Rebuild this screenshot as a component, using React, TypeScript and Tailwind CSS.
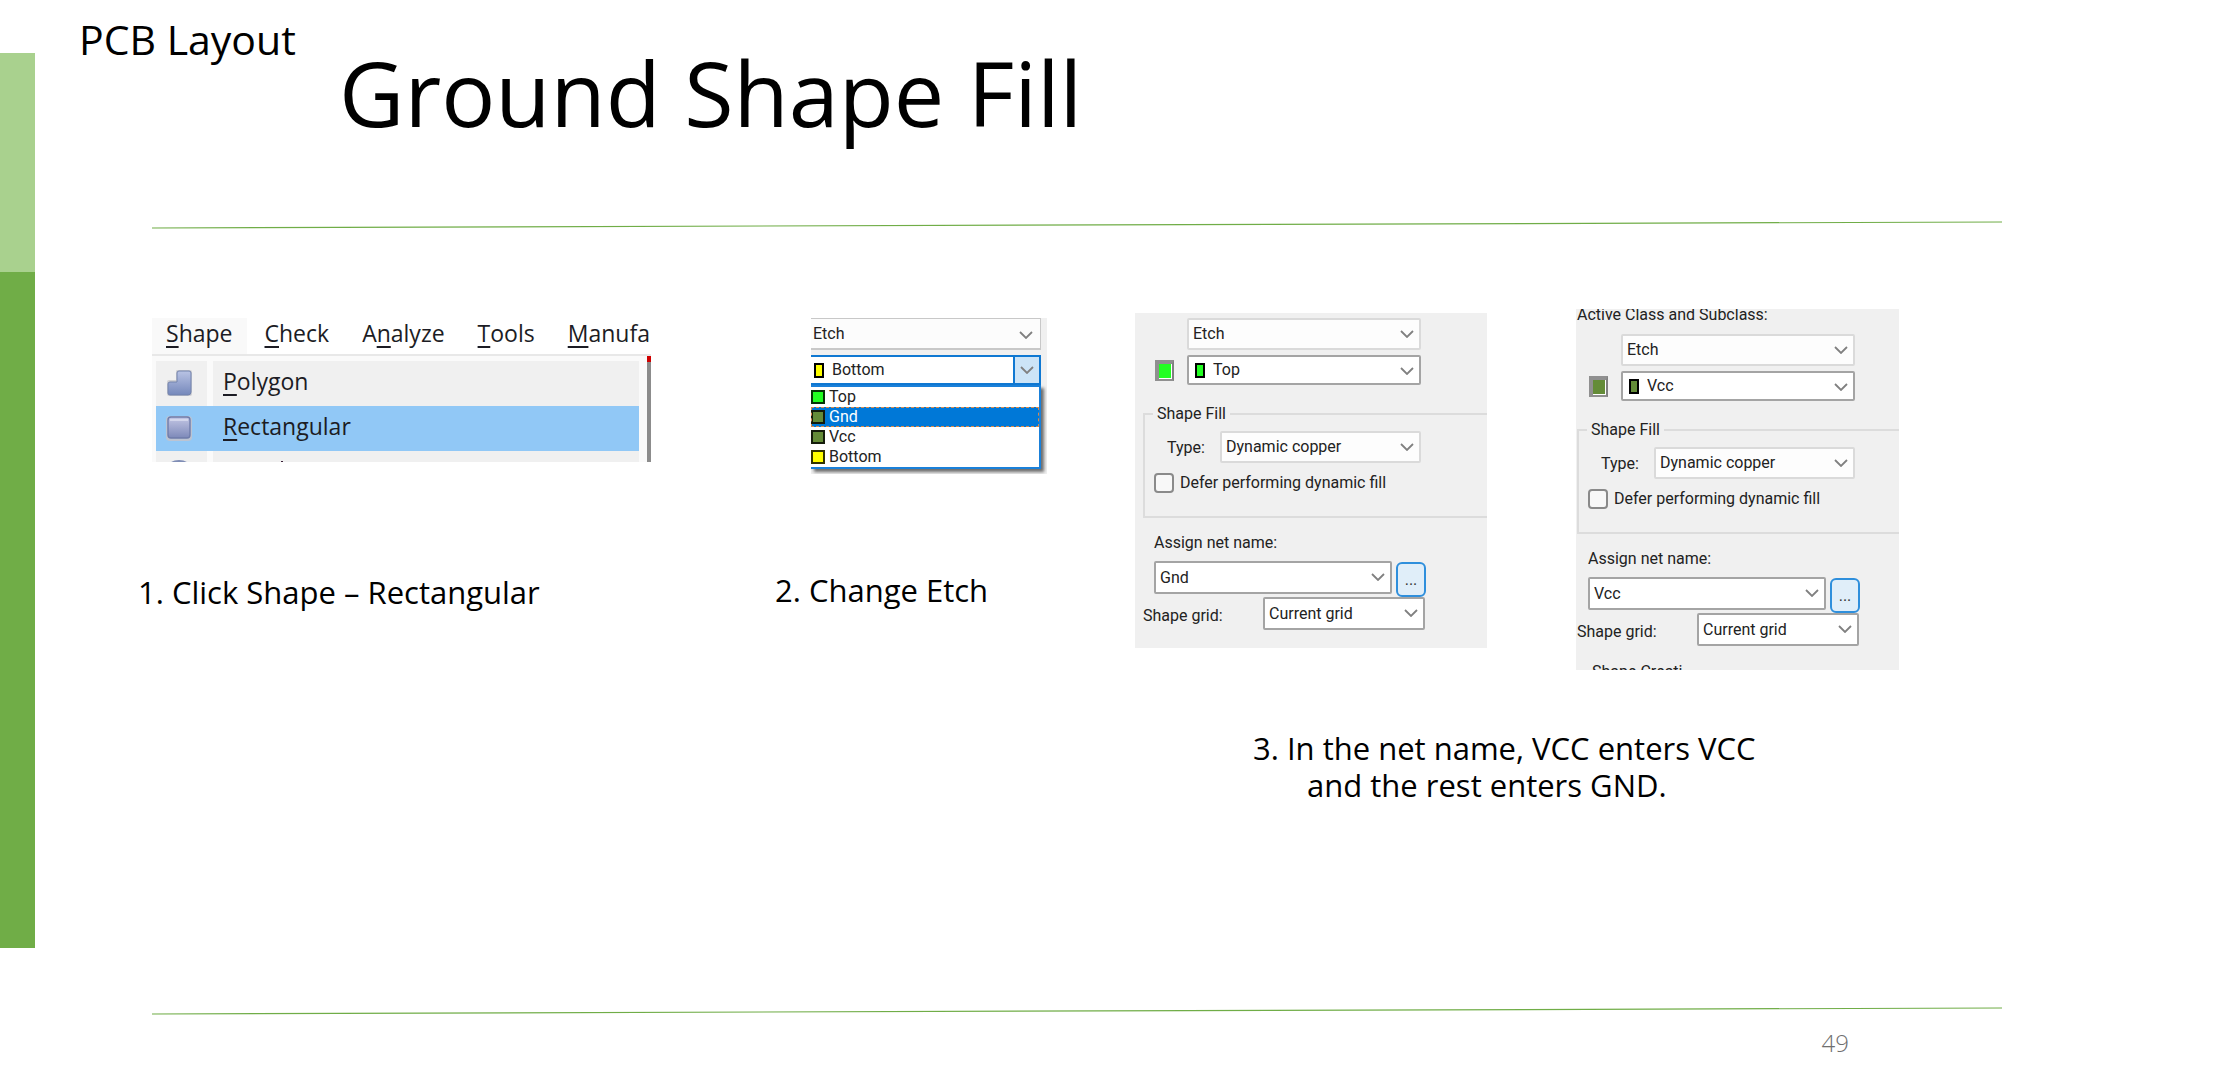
import { useState } from 'react'
import type { ReactNode } from 'react'
import clsx from 'clsx'

const LAYERS = [
  { name: 'Top', swatch: 'bg-[#22ff22]' },
  { name: 'Gnd', swatch: 'bg-[#648c38]' },
  { name: 'Vcc', swatch: 'bg-[#648c38]' },
  { name: 'Bottom', swatch: 'bg-[#ffff00]' },
]

const MENUS = [
  { before: '', key: 'S', after: 'hape', open: true },
  { before: '', key: 'C', after: 'heck' },
  { before: 'A', key: 'n', after: 'alyze' },
  { before: '', key: 'T', after: 'ools' },
  { before: '', key: 'M', after: 'anufa' },
]

function Rule() {
  return (
    <svg className="block w-full h-2" viewBox="0 0 1850 8" preserveAspectRatio="none" aria-hidden="true">
      <line x1="0" y1="7" x2="1850" y2="1" stroke="#70ad47" strokeWidth="1.2" />
    </svg>
  )
}

function Chevron({ className }: { className?: string }) {
  return (
    <svg className={clsx('pointer-events-none', className)} width="14" height="8" viewBox="0 0 14 8" fill="none" aria-hidden="true">
      <path d="M1 1l6 6 6-6" stroke="#808080" strokeWidth="1.8" />
    </svg>
  )
}

interface ComboProps {
  id: string
  value: string
  label?: string
  muted?: boolean
  swatch?: string
  className?: string
}

function Combo({ id, value, label, muted, swatch, className }: ComboProps) {
  return (
    <div className={clsx('relative', className)}>
      <select
        id={id}
        aria-label={label}
        defaultValue={value}
        className={clsx(
          'block w-full h-full appearance-none rounded-xs border-2 pr-6 outline-none',
          swatch ? 'pl-6' : 'pl-1',
          muted ? 'bg-[#fdfdfd] border-[#dadada]' : 'bg-white border-[#a4a4a4]',
        )}
      >
        <option>{value}</option>
      </select>
      {swatch && <span className={clsx('absolute left-2 top-2 w-2.5 h-[15px] border-2 border-black', swatch)} />}
      <Chevron className="absolute right-[7px] top-3" />
    </div>
  )
}

function Mnemonic({ before = '', letter, after }: { before?: string; letter: string; after: string }) {
  return (
    <span>
      {before}
      <span className="underline decoration-2 underline-offset-4">{letter}</span>
      {after}
    </span>
  )
}

function PolygonIcon() {
  return (
    <svg width="26" height="26" viewBox="0 0 26 26" aria-hidden="true">
      <defs>
        <linearGradient id="polyFill" x1="0" y1="0" x2="0" y2="1">
          <stop offset="0" stopColor="#b9c3e4" />
          <stop offset="1" stopColor="#7588bb" />
        </linearGradient>
      </defs>
      <path d="M11 0h13q2 0 2 2v22q0 2-2 2H3q-2 0-2-2V12q0-2 2-2h7V2q0-2 1-2z" fill="#cfcfd2" />
      <path d="M13 1h10q2 0 2 2v19q0 3-3 3H4q-2 0-2-2v-9q0-2 2-2h7V3q0-2 2-2z" fill="url(#polyFill)" stroke="#7383ad" />
    </svg>
  )
}

function RectIcon() {
  return (
    <svg width="26" height="26" viewBox="0 0 26 26" aria-hidden="true">
      <defs>
        <linearGradient id="rectFill" x1="0" y1="0" x2="0" y2="1">
          <stop offset="0" stopColor="#c3c6e4" />
          <stop offset="1" stopColor="#7d89b9" />
        </linearGradient>
      </defs>
      <rect x="0" y="1" width="26" height="25" rx="4" fill="#bcc4d2" />
      <rect x="2" y="2" width="22" height="21" rx="3" fill="url(#rectFill)" stroke="#6f7cab" strokeWidth="1.4" />
      <path d="M4 5h18" stroke="#dcdff0" strokeWidth="1.5" />
    </svg>
  )
}

function MenuRow({ icon, active, children }: { icon: ReactNode; active?: boolean; children: ReactNode }) {
  return (
    <button type="button" className={clsx('flex w-full h-[45px] text-left', active && 'bg-[#91c8f6]')}>
      <span className={clsx('w-[51px] h-full flex items-center pl-2.5 pb-0.5', !active && 'bg-[#f0f0f0]')}>{icon}</span>
      <span className={clsx('ml-1.5 pl-2.5 flex-1 h-full leading-10', !active && 'bg-[#f0f0f0]')}>{children}</span>
    </button>
  )
}

function ShapeMenu() {
  return (
    <div className="ml-3 w-[499px] h-36 overflow-hidden font-['Open_Sans','Noto_Sans',sans-serif] text-[23px] text-[#1c1c24]">
      <nav className="flex h-[38px] border-b-2 border-[#e8e8e8] leading-7">
        {MENUS.map(m => (
          <button key={m.key} type="button" className={clsx('shrink-0 pb-1.5', m.open ? 'bg-[#f9f9f9] px-3.5 mr-0.5' : 'bg-white pl-4 pr-[17px]')}>
            <Mnemonic before={m.before} letter={m.key} after={m.after} />
          </button>
        ))}
      </nav>
      <div className="flex">
        <div className="flex-1 bg-[#fafafa] pl-1 pr-2 pt-[5px]">
          <MenuRow icon={<PolygonIcon />}><Mnemonic letter="P" after="olygon" /></MenuRow>
          <MenuRow active icon={<RectIcon />}><Mnemonic letter="R" after="ectangular" /></MenuRow>
          <div className="flex h-3">
            <div className="w-[51px] bg-[#f0f0f0] pl-3.5">
              {/* top of the next entry, cut by the window edge */}
              <svg className="block" width="18" height="12" viewBox="0 0 18 12" aria-hidden="true">
                <path d="M0 12q3-3 9-3t9 3z" fill="#7f8db5" />
              </svg>
            </div>
            <div className="ml-1.5 flex-1 bg-[#f0f0f0] pl-[68px] pt-2.5">
              <div className="w-0.5 h-0.5 bg-[#3a2038]" />
            </div>
          </div>
        </div>
        {/* edge of the drawing canvas behind the menu */}
        <div className="w-1 bg-[#8c8c8c] border-t-[6px] border-[#d00000]" />
      </div>
    </div>
  )
}

function EtchDropdown() {
  const [selected, setSelected] = useState('Gnd')

  return (
    <div className="ml-[34px] w-[236px] h-[156px] overflow-hidden bg-[#f0f0f0] pr-1.5 font-[Roboto,sans-serif] text-base text-[#222]">
      <div className="relative h-8 border-b-2 border-r border-t border-[#c8c8c8] bg-[#fcfcfc]">
        <select aria-label="Class" className="block w-full h-full appearance-none pl-0.5 outline-none">
          <option>Etch</option>
        </select>
        <Chevron className="absolute right-[7px] top-3" />
      </div>
      <button
        type="button"
        aria-haspopup="listbox"
        aria-expanded="true"
        className="mt-[5px] flex w-full h-[30px] items-center border-2 border-l-0 border-[#0f78d2] bg-white text-left"
      >
        <span className="ml-[3px] mr-2 w-2.5 h-[15px] border-2 border-black bg-[#ffff00]" />
        <span className="flex-1">Bottom</span>
        <span className="w-[26px] h-full flex items-center justify-center border-l-2 border-[#0f78d2] bg-[#cce4f7]">
          <Chevron />
        </span>
      </button>
      <ul role="listbox" aria-label="Subclass" className="border-2 border-l-0 border-[#1a80d9] bg-white shadow-[3px_3px_3px_rgba(0,0,0,0.55)]">
        {LAYERS.map(l => (
          <li
            key={l.name}
            role="option"
            aria-selected={l.name === selected}
            onClick={() => setSelected(l.name)}
            className={clsx(
              'flex h-5 items-center gap-1 leading-5',
              l.name === selected && 'bg-[#0078d7] text-white outline-1 -outline-offset-1 outline-dashed outline-[#d98a4a]',
            )}
          >
            <span className={clsx('w-3.5 h-3.5 border-2 border-black/80', l.swatch)} />
            {l.name}
          </li>
        ))}
      </ul>
    </div>
  )
}

interface OptionsProps {
  id: string
  layer: string
  swatch: string
  inset: string
  className: string
  header?: string
  footer?: string
}

function OptionsPanel({ id, layer, swatch, inset, className, header, footer }: OptionsProps) {
  return (
    <form className={clsx('overflow-hidden bg-[#f0f0f0] font-[Roboto,sans-serif] text-base leading-5 text-[#222]', inset, className)}>
      {header && <div className="-mt-1.5 h-[26px] leading-6">{header}</div>}
      <div className="flex flex-col gap-[5px] pt-[5px] w-[278px]">
        <Combo id={`${id}-class`} label="Class" value="Etch" muted className="ml-11 h-8" />
        <div className="flex items-start">
          <span className="ml-3 mr-[13px] mt-[5px] w-[19px] h-[21px] border-2 border-[#909090] border-l-4 border-t-4 border-r-[#808080]">
            <span className={clsx('block w-full h-full border-r border-b border-white', swatch)} />
          </span>
          <Combo id={`${id}-subclass`} label="Subclass" value={layer} swatch={swatch} className="flex-1 h-[30px]" />
        </div>
      </div>

      <fieldset className="mt-[19px] h-[114px] border-2 border-r-0 border-[#dcdcdc] pl-2">
        <legend className="px-1">Shape Fill</legend>
        <div className="mt-[7px] flex items-center w-[268px]">
          <label htmlFor={`${id}-type`} className="w-[67px] pl-3.5 pt-0.5">Type:</label>
          <Combo id={`${id}-type`} value="Dynamic copper" muted className="w-[201px] h-8" />
        </div>
        <label className="mt-2.5 flex items-center gap-1.5 pl-px">
          <input type="checkbox" className="size-5 appearance-none rounded-sm border-2 border-[#8a8a8a] bg-[#f8f8f8]" />
          Defer performing dynamic fill
        </label>
      </fieldset>

      <label htmlFor={`${id}-net`} className="mt-[15px] block pl-[11px]">Assign net name:</label>
      <div className="mt-2 flex gap-1 pl-[11px]">
        <Combo id={`${id}-net`} value={layer === 'Top' ? 'Gnd' : layer} className="w-[238px] h-[33px]" />
        <button type="button" className="mt-px w-[30px] h-[35px] rounded-md border-2 border-[#2f8fdc] bg-[#e0eef9] text-[#333]">...</button>
      </div>
      <div className="flex items-center">
        <label htmlFor={`${id}-grid`} className="w-[120px] pt-1">Shape grid:</label>
        <Combo id={`${id}-grid`} value="Current grid" className="w-[162px] h-[33px]" />
      </div>
      {footer && <div className="mt-4 pl-[15px]">{footer}</div>}
    </form>
  )
}

export default function App() {
  return (
    <div className="flex bg-white font-['Open_Sans','Noto_Sans',sans-serif] text-black">
      <aside className="w-[35px] shrink-0 pt-[53px]">
        <div className="h-[219px] bg-[#a9d18e]" />
        <div className="h-[676px] bg-[#70ad47]" />
      </aside>

      <div className="flex-1 min-w-0">
        <header className="flex h-[221px] items-start pl-11">
          <p className="w-[260px] pt-3 text-[41px] leading-[54px] whitespace-nowrap">PCB Layout</p>
          <h1 className="pt-8 text-[90px] leading-[120px] whitespace-nowrap">Ground Shape Fill</h1>
        </header>
        <div className="pl-[117px] pr-[236px]"><Rule /></div>

        <main className="grid grid-cols-[637fr_358fr_1103fr] h-[778px] pl-[105px] pt-20 text-[31px] leading-[37px]">
          <section className="pt-[9px]">
            <ShapeMenu />
            <p className="-ml-0.5 mt-28">1. Click Shape – Rectangular</p>
          </section>

          <section className="pt-[9px]">
            <EtchDropdown />
            <p className="-ml-0.5 mt-[98px]">2. Change Etch</p>
          </section>

          <section>
            <div className="grid grid-cols-[441fr_662fr] items-start">
              <OptionsPanel id="gnd" layer="Top" swatch="bg-[#22ff22]" inset="pl-2" className="mt-1 w-[352px] h-[335px]" />
              <OptionsPanel
                id="vcc"
                layer="Vcc"
                swatch="bg-[#648c38]"
                inset="pl-px"
                className="w-[323px] h-[361px]"
                header="Active Class and Subclass:"
                footer="Shape Creati"
              />
            </div>
            <p className="mt-[60px] pl-[118px]">
              3. In the net name, VCC enters VCC
              <span className="block pl-[54px]">and the rest enters GND.</span>
            </p>
          </section>
        </main>

        <footer className="pl-[117px] pr-[236px]">
          <Rule />
          <p className="mt-3 pr-[153px] text-right text-2xl font-light leading-8 text-[#6f6f6f]">49</p>
        </footer>
      </div>
    </div>
  )
}
